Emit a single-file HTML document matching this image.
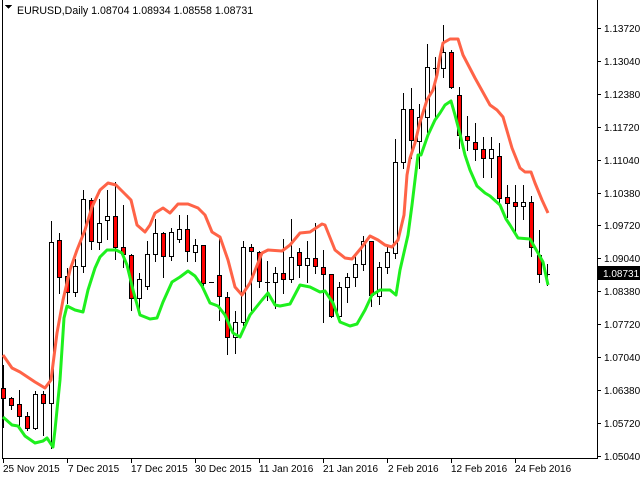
<!DOCTYPE html>
<html><head><meta charset="utf-8"><style>
html,body{margin:0;padding:0;background:#fff;width:640px;height:480px;overflow:hidden}
svg{display:block;font-family:"Liberation Sans",sans-serif;font-size:10px}
</style></head><body>
<svg id="s" width="640" height="480" xmlns="http://www.w3.org/2000/svg" shape-rendering="crispEdges">
<rect width="640" height="480" fill="#fff"/>
<line x1="2.5" y1="0" x2="2.5" y2="459" stroke="#000"/>
<line x1="597.5" y1="0" x2="597.5" y2="459" stroke="#000"/>
<line x1="2" y1="458.5" x2="598" y2="458.5" stroke="#000"/>
<path d="M5 5 L12 5 L8.5 9 Z" fill="#000"/>
<text x="17" y="14" fill="#000" style="font-size:10.6px">EURUSD,Daily  1.08704 1.08934 1.08558 1.08731</text>
<g id="c"></g>
<g id="ax" fill="#000"></g>
<rect x="598" y="266" width="42" height="14" fill="#000"/>
<text x="603" y="277" fill="#fff">1.08731</text>
</svg>
<script>
var NS="http://www.w3.org/2000/svg",g=document.getElementById('c'),ax=document.getElementById('ax');
function el(n,a,p){var e=document.createElementNS(NS,n);for(var k in a)e.setAttribute(k,a[k]);(p||g).appendChild(e);return e;}
var C=[[3,388,398,365,427,1],[11,398,405,397,409,1],[19,404,416,390,427,1],[27,416,428,412,430,1],[35,394,428,391,429,0],[43,394,403,391,435,1],[51,242,403,221,448,0],[59,240,277,233,293,1],[67,276,292,268,303,1],[75,266,292,259,296,0],[83,199,266,190,272,0],[91,200,241,198,249,1],[99,223,242,199,249,0],[107,216,220,190,239,0],[115,216,247,182,259,1],[123,247,254,205,267,1],[131,255,298,254,310,1],[139,279,298,273,309,0],[147,254,286,241,289,0],[155,233,254,219,261,0],[163,233,256,232,277,1],[171,232,256,228,260,0],[179,229,239,215,242,0],[187,229,251,215,261,1],[195,245,252,239,261,0],[203,245,283,245,285,1],[211,282,282,282,282,1],[219,275,296,239,320,1],[227,297,337,292,354,1],[235,322,337,311,353,0],[243,247,322,241,325,0],[251,247,251,244,310,1],[259,252,281,251,287,1],[267,282,282,261,300,1],[275,273,282,267,308,0],[283,273,279,239,293,1],[291,257,279,219,282,0],[299,252,265,248,277,1],[307,258,265,241,282,0],[315,258,266,223,273,1],[323,267,274,250,322,1],[331,274,316,274,317,1],[339,287,316,282,317,0],[347,277,287,273,302,0],[355,264,277,253,286,0],[363,241,264,236,270,0],[371,241,295,241,306,1],[379,267,296,262,304,0],[387,252,267,245,273,0],[395,162,253,139,258,0],[403,109,162,93,168,0],[411,109,140,88,158,1],[419,117,141,104,168,0],[427,67,117,44,132,0],[435,68,68,57,120,1],[443,52,68,25,77,0],[451,52,87,50,88,1],[459,95,135,87,148,1],[467,136,140,116,150,1],[475,142,149,123,160,1],[483,149,158,137,177,1],[491,149,158,137,177,0],[499,156,198,143,203,1],[507,197,203,185,217,1],[515,202,206,185,233,1],[523,202,206,185,219,0],[531,202,247,196,256,1],[539,255,274,230,282,1],[547,274,274,264,285,1]];
C.forEach(function(c){var x=c[0];
 el('line',{x1:x+.5,y1:c[3],x2:x+.5,y2:c[4]+1,stroke:'#000'});
 if(c[1]==c[2]){el('line',{x1:x-2,y1:c[1]+.5,x2:x+3,y2:c[1]+.5,stroke:'#000'});}
 else el('rect',{x:x-1.5,y:c[1]+.5,width:4,height:c[2]-c[1],fill:c[5]?'#ff0000':'#fff',stroke:'#000'});
});
var R=[[3,355],[12,368],[20,372],[35,382],[45,388],[51,380],[57,333],[63,300],[70,270],[77,250],[85,230],[92,207],[100,190],[108,183],[116,185],[125,194],[131,200],[137,225],[145,232],[150,225],[155,213],[163,208],[170,213],[178,204],[188,204],[198,208],[205,215],[212,232],[220,237],[228,260],[235,287],[242,295],[250,283],[262,253],[268,250],[282,251],[290,245],[300,233],[310,232],[322,224],[325,225],[335,250],[345,258],[352,259],[362,247],[370,236],[378,240],[385,245],[392,247],[398,240],[404,215],[407,175],[410,158],[415,143],[420,122],[427,100],[433,90],[437,75],[440,57],[443,43],[450,39],[458,39],[463,55],[475,78],[490,105],[497,110],[503,117],[512,148],[520,168],[525,172],[531,172],[535,183],[542,200],[548,213]];
var G=[[3,417],[12,425],[18,426],[25,436],[35,443],[43,441],[47,438],[53,447],[55,430],[60,380],[64,318],[67,306],[75,310],[83,312],[88,290],[95,268],[100,257],[107,250],[116,250],[122,253],[127,265],[133,290],[140,315],[150,319],[157,318],[163,302],[172,282],[180,277],[188,271],[195,276],[202,286],[210,303],[218,306],[225,315],[233,333],[240,337],[250,315],[262,300],[268,293],[275,305],[280,306],[290,304],[300,285],[310,287],[320,292],[325,291],[333,303],[340,322],[350,326],[357,324],[365,310],[372,295],[380,290],[390,290],[396,295],[400,270],[408,235],[412,205],[418,155],[421,155],[428,135],[435,120],[440,113],[445,105],[451,101],[455,115],[460,134],[465,155],[470,170],[477,186],[485,193],[490,196],[500,205],[506,219],[510,225],[518,238],[530,239],[538,253],[543,262],[548,285]];
function pl(p,c){el('polyline',{points:p.map(function(q){return q.join(',')}).join(' '),fill:'none',stroke:c,'stroke-width':3,'stroke-linejoin':'round','shape-rendering':'auto'});}
pl(R,'#ff6347');pl(G,'#1ef01e');
var P=['1.13720','1.13040','1.12380','1.11720','1.11040','1.10380','1.09720','1.09040','1.08380','1.07720','1.07040','1.06380','1.05720','1.05040'];
P.forEach(function(t,i){var y=Math.round(28+i*32.9);el('line',{x1:597,y1:y+.5,x2:601,y2:y+.5,stroke:'#000'},ax);var e=el('text',{x:604,y:y+4},ax);e.textContent=t;});
var D=[['25 Nov 2015',3],['7 Dec 2015',67],['17 Dec 2015',131],['30 Dec 2015',195],['11 Jan 2016',259],['21 Jan 2016',323],['2 Feb 2016',387],['12 Feb 2016',451],['24 Feb 2016',515]];
D.forEach(function(d){el('line',{x1:d[1]+.5,y1:458,x2:d[1]+.5,y2:463,stroke:'#000'},ax);var e=el('text',{x:d[1]+(d[0].length>10?0:1),y:472},ax);e.textContent=d[0];});
</script>
</body></html>
